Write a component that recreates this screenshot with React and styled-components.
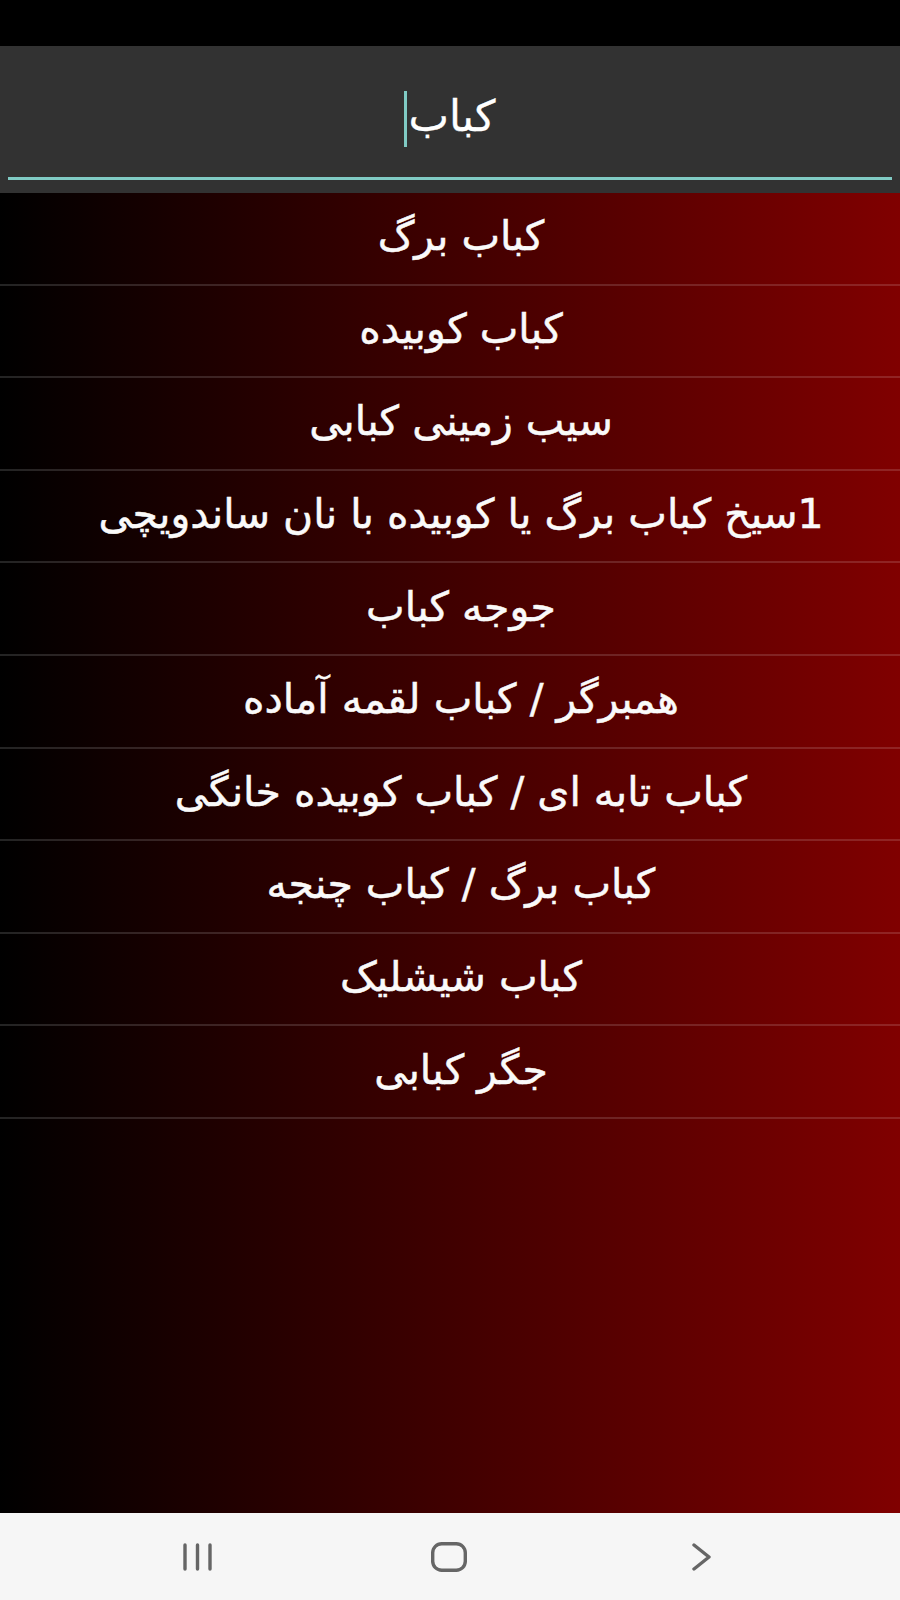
import React, { useState } from "react"
import styled, { createGlobalStyle } from "styled-components"

const GlobalStyle = createGlobalStyle`
  html, body {
    margin: 0;
    padding: 0;
    background: #000;
  }
  #root {
    height: 1600px;
  }
`

const items = [
  "کباب برگ",
  "کباب کوبیده",
  "سیب زمینی کبابی",
  "1سیخ کباب برگ یا کوبیده با نان ساندویچی",
  "جوجه کباب",
  "همبرگر / کباب لقمه آماده",
  "کباب تابه ای / کباب کوبیده خانگی",
  "کباب برگ / کباب چنجه",
  "کباب شیشلیک",
  "جگر کبابی"
]

const Screen = styled.div`
  width: 900px;
  height: 1600px;
  display: flex;
  flex-direction: column;
  font-family: "DejaVu Sans", "Noto Sans", sans-serif;
  overflow: hidden;
`

const StatusBar = styled.div`
  height: 46px;
  background: #000;
  flex-shrink: 0;
`

const SearchBar = styled.div`
  height: 147px;
  background: #323232;
  flex-shrink: 0;
  box-sizing: border-box;
  padding: 0 8px 13px;
  display: flex;
  flex-direction: column;
  justify-content: flex-end;
`

const Field = styled.div`
  height: 100%;
  border-bottom: 3px solid #80cbc4;
  display: flex;
  align-items: center;
  justify-content: center;
  direction: rtl;
  padding-top: 16px;
  box-sizing: border-box;
`

const Query = styled.span`
  color: #fff;
  font-size: 43px;
  line-height: 1;
  margin-left: 1px;
  padding-bottom: 6px;
  -webkit-text-stroke: 0.3px #fff;
`

const Caret = styled.span`
  width: 3px;
  height: 56px;
  background: #80cbc4;
  display: inline-block;
  margin-bottom: 2px;
`

const List = styled.ul`
  list-style: none;
  margin: 0;
  padding: 0;
  flex: 1;
  background: linear-gradient(to right, #000 0%, #800000 100%);
`

const Row = styled.li`
  height: 86.6px;
  border-bottom: 2px solid rgba(255, 255, 255, 0.14);
  display: flex;
  align-items: center;
  justify-content: center;
  direction: rtl;
  color: #fafafa;
  font-size: 41px;
  padding: 0 0 4px 22px;
  box-sizing: content-box;
  white-space: nowrap;
  -webkit-text-stroke: 0.5px #fafafa;
`

const NavBar = styled.div`
  height: 87px;
  background: #f6f6f6;
  flex-shrink: 0;
  display: grid;
  grid-template-columns: repeat(3, 1fr);
  align-items: center;
  justify-items: center;
  padding: 0 72px 0 71px;
`

const NavButton = styled.button`
  background: none;
  border: none;
  padding: 0;
  margin-top: 1px;
  display: flex;
  cursor: pointer;
`

function RecentsIcon() {
  return (
    <svg width="31" height="28" viewBox="0 0 31 28" fill="none">
      <g stroke="#666" strokeWidth="3.4" strokeLinecap="round">
        <line x1="3" y1="2" x2="3" y2="26" />
        <line x1="15.5" y1="2" x2="15.5" y2="26" />
        <line x1="28" y1="2" x2="28" y2="26" />
      </g>
    </svg>
  )
}

function HomeIcon() {
  return (
    <svg width="36" height="30" viewBox="0 0 36 30" fill="none">
      <rect x="1.7" y="1.7" width="32.6" height="26.6" rx="9" stroke="#666" strokeWidth="3.4" />
    </svg>
  )
}

function BackIcon() {
  return (
    <svg width="21" height="28" viewBox="0 0 21 28" fill="none">
      <polyline
        points="3,2 18,14 3,26"
        stroke="#666"
        strokeWidth="3.4"
        strokeLinecap="round"
        strokeLinejoin="round"
      />
    </svg>
  )
}

export default function App() {
  const [query] = useState("کباب")

  return (
    <>
      <GlobalStyle />
      <Screen>
        <StatusBar />
        <SearchBar>
          <Field>
            <Query>{query}</Query>
            <Caret />
          </Field>
        </SearchBar>
        <List>
          {items.map(item => (
            <Row key={item}>{item}</Row>
          ))}
        </List>
        <NavBar>
          <NavButton aria-label="recent apps">
            <RecentsIcon />
          </NavButton>
          <NavButton aria-label="home">
            <HomeIcon />
          </NavButton>
          <NavButton aria-label="back">
            <BackIcon />
          </NavButton>
        </NavBar>
      </Screen>
    </>
  )
}
